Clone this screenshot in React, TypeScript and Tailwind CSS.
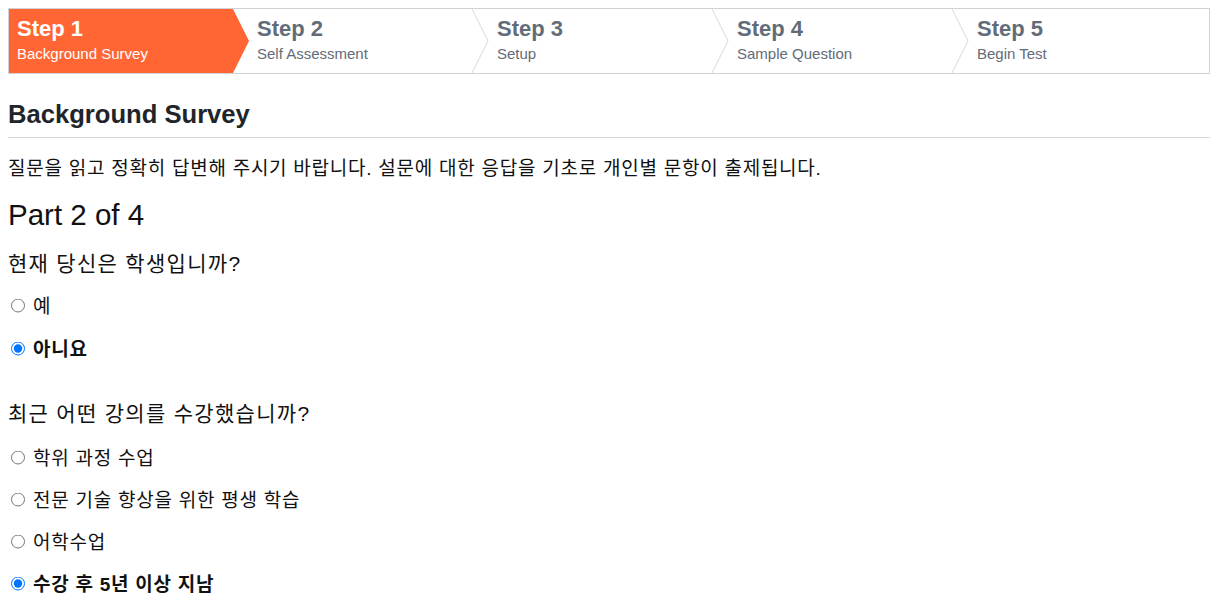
import React from "react";

const steps = [
  { t: "Step 1", s: "Background Survey" },
  { t: "Step 2", s: "Self Assessment" },
  { t: "Step 3", s: "Setup" },
  { t: "Step 4", s: "Sample Question" },
  { t: "Step 5", s: "Begin Test" },
];

const font = "font-['Liberation_Sans','Noto_Sans_CJK_KR',sans-serif]";

function Chevron() {
  return (
    <svg
      className="absolute right-0 top-0 h-full w-[17px]"
      viewBox="0 0 17 64"
      preserveAspectRatio="none"
    >
      <polyline
        points="0,0 16,32 0,64"
        fill="none"
        stroke="#dadada"
        strokeWidth="1"
        vectorEffect="non-scaling-stroke"
      />
    </svg>
  );
}

function Option({ label, checked, h }: { label: string; checked?: boolean; h: string }) {
  return (
    <label className={`flex items-center ${h}`}>
      <input
        type="radio"
        checked={!!checked}
        readOnly
        className="m-0 ml-[3px] mr-[8px] h-[14px] w-[14px] -translate-y-[1.5px]"
      />
      <span
        className={`text-[19px] leading-[24px] tracking-[0.75px] text-[#111] ${
          checked ? "font-bold" : ""
        }`}
      >
        {label}
      </span>
    </label>
  );
}

export default function App() {
  return (
    <div className={`${font} bg-white min-h-[612px]`}>
      <div className="w-[1202px] ml-2 pt-2">
        <div className="flex h-[66px] border border-[#cfd3d8]">
          {steps.map((st, i) => (
            <div
              key={st.t}
              className={`relative flex-1 pl-[8px] pt-[7px] ${
                i === 0
                  ? "bg-[#ff6633] text-white [clip-path:polygon(0_0,calc(100%-16px)_0,100%_50%,calc(100%-16px)_100%,0_100%)]"
                  : "text-[#626c78]"
              }`}
            >
              <div className="text-[22px] leading-[26px] font-bold">{st.t}</div>
              <div className="mt-[3px] text-[15px] leading-[18px]">{st.s}</div>
              {i > 0 && i < 4 && <Chevron />}
            </div>
          ))}
        </div>

        <h2 className="mt-[25px] text-[25.6px] leading-[30px] font-bold text-[#212529] pb-[8px] border-b border-[#d9d9d9]">
          Background Survey
        </h2>

        <p className="mt-[19px] text-[19px] leading-[24px] tracking-[0.75px] text-[#111]">
          질문을 읽고 정확히 답변해 주시기 바랍니다. 설문에 대한 응답을 기초로 개인별 문항이 출제됩니다.
        </p>

        <div className="mt-[16px] text-[29.5px] leading-[36px] text-[#111]">Part 2 of 4</div>

        <div className="mt-[17px] text-[21px] leading-[28px] tracking-[1.3px] text-[#111]">
          현재 당신은 학생입니까?
        </div>
        <div className="mt-[7px]">
          <Option label="예" h="h-[43px]" />
          <Option label="아니요" checked h="h-[43px]" />
        </div>

        <div className="mt-[29px] text-[21px] leading-[28px] tracking-[1.3px] text-[#111]">
          최근 어떤 강의를 수강했습니까?
        </div>
        <div className="mt-[10px]">
          <Option label="학위 과정 수업" h="h-[42px]" />
          <Option label="전문 기술 향상을 위한 평생 학습" h="h-[42px]" />
          <Option label="어학수업" h="h-[42px]" />
          <Option label="수강 후 5년 이상 지남" checked h="h-[42px]" />
        </div>
      </div>
    </div>
  );
}
